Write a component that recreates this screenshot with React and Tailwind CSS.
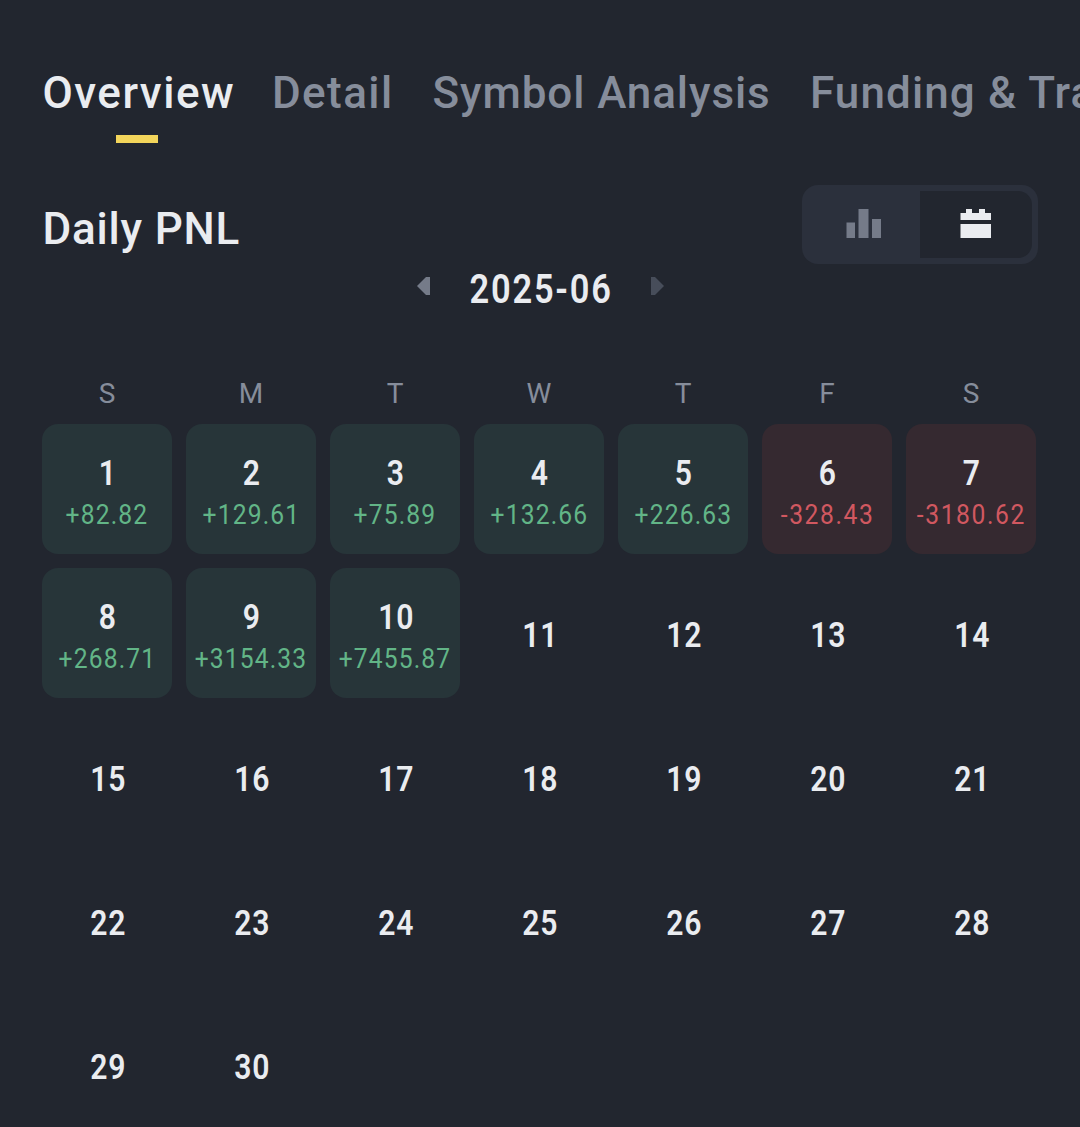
import { useState } from 'react';

const TABS = [
  { label: 'Overview', className: 'w-[189px] tracking-[1.5px]' },
  { label: 'Detail', className: 'w-[120px] tracking-[1.4px]' },
  { label: 'Symbol Analysis', className: 'w-[337px] tracking-[0.9px]' },
  { label: 'Funding & Transaction', className: 'w-[480px] tracking-[1.1px]' },
];

const WEEKDAYS = ['S', 'M', 'T', 'W', 'T', 'F', 'S'];

const PNL = {
  1: '+82.82',
  2: '+129.61',
  3: '+75.89',
  4: '+132.66',
  5: '+226.63',
  6: '-328.43',
  7: '-3180.62',
  8: '+268.71',
  9: '+3154.33',
  10: '+7455.87',
};

const DAYS = Array.from({ length: 30 }, (_, i) => i + 1);

function BarsIcon() {
  return (
    <svg width="36" height="30" viewBox="0 0 36 30" fill="#757b89">
      <rect x="0.5" y="13.5" width="8.5" height="15.5" />
      <rect x="12.5" y="0" width="10" height="29" />
      <rect x="26" y="10" width="9" height="19" />
    </svg>
  );
}

function CalendarIcon() {
  return (
    <svg width="31" height="30" viewBox="0 0 31 30" fill="#eaecf0">
      <path d="M0.5 4H6V0h6v4h7V0h6v4h6v7H0.5z" />
      <rect x="0.5" y="15" width="30.5" height="14" />
    </svg>
  );
}

function DayNumber({ day }) {
  return (
    <span
      className={`inline-block scale-x-[0.86] text-[35px] leading-[42px] font-semibold tracking-[1px] text-[#eaecf0] ${
        day > 9 ? 'pl-[3.5px]' : 'pl-[1.5px]'
      }`}
    >
      {day}
    </span>
  );
}

function DayCell({ day }) {
  const pnl = PNL[day];

  if (!pnl) {
    return (
      <div className="flex h-[130px] items-center justify-center pt-1.5">
        <DayNumber day={day} />
      </div>
    );
  }

  const loss = pnl.startsWith('-');

  return (
    <div className={`flex h-[130px] flex-col items-center rounded-2xl pt-[29px] ${loss ? 'bg-[#352930]' : 'bg-[#273539]'}`}>
      <DayNumber day={day} />
      <span
        className={`-mt-px scale-x-[0.88] text-[28px] leading-[42px] whitespace-nowrap ${
          loss ? 'pl-[1.5px] tracking-[1.8px] text-[#d15860]' : 'pl-[1px] tracking-[1.3px] text-[#62b587]'
        }`}
      >
        {pnl}
      </span>
    </div>
  );
}

export default function App() {
  const [tab, setTab] = useState('Overview');
  const [view, setView] = useState('calendar');

  return (
    <div className="h-[1127px] w-[1080px] overflow-hidden bg-[#22262f] font-['Roboto','Noto_Sans',sans-serif] text-[#eaecf0]">
      {/* Tabs */}
      <nav className="flex gap-[40.5px] pt-[63px] pl-[42.5px]">
        {TABS.map(({ label, className }) => (
          <button
            key={label}
            onClick={() => setTab(label)}
            className={`flex shrink-0 flex-col items-start text-[44px] leading-[60px] font-medium whitespace-nowrap ${className} ${
              tab === label ? 'text-[#eaecf0]' : 'text-[#868d9b]'
            }`}
          >
            {label}
            <span className={`mx-auto mt-[11.5px] h-[8.5px] w-[42px] ${tab === label ? 'bg-[#f3d55b]' : ''}`} />
          </button>
        ))}
      </nav>

      {/* Title and view switch */}
      <div className="mt-[42px] flex h-[79px] justify-between pr-[42px] pl-[42.5px]">
        <h2 className="pt-[14px] text-[44px] leading-[60px] font-medium tracking-[0.8px]">Daily PNL</h2>
        <div className="flex h-[79px] w-[236px] rounded-2xl bg-[#2b303c] p-1.5">
          <button onClick={() => setView('chart')} className="flex w-28 items-center justify-center pb-px">
            <BarsIcon />
          </button>
          <button
            onClick={() => setView('calendar')}
            className={`flex w-28 items-center justify-center rounded-r-[14px] pr-0.5 pb-px ${
              view === 'calendar' ? 'bg-[#22262f]' : ''
            }`}
          >
            <CalendarIcon />
          </button>
        </div>
      </div>

      {/* Month picker */}
      <div className="flex h-[52px] items-center justify-center pl-px">
        <svg width="13" height="18" viewBox="0 0 13 18" fill="#757b89" className="mb-2">
          <path d="M0 9 9 0h4v18H9z" />
        </svg>
        <div className="flex w-[221px] justify-center">
          <span className="scale-x-[0.86] pl-0.5 text-[40px] leading-[52px] font-semibold tracking-[2.1px] whitespace-nowrap">
            2025-06
          </span>
        </div>
        <svg width="13" height="18" viewBox="0 0 13 18" fill="#474d5a" className="mb-2">
          <path d="M13 9 4 0H0v18h4z" />
        </svg>
      </div>

      {/* Calendar */}
      <div className="mt-[58px] ml-[42px] w-[994px]">
        <div className="grid h-[50px] grid-cols-7 gap-x-3.5 text-center text-[28px] leading-[40px] text-[#868d9b]">
          {WEEKDAYS.map((d, i) => (
            <span key={i}>{d}</span>
          ))}
        </div>
        <div className="grid grid-cols-7 gap-3.5">
          {DAYS.map((day) => (
            <DayCell key={day} day={day} />
          ))}
        </div>
      </div>
    </div>
  );
}
